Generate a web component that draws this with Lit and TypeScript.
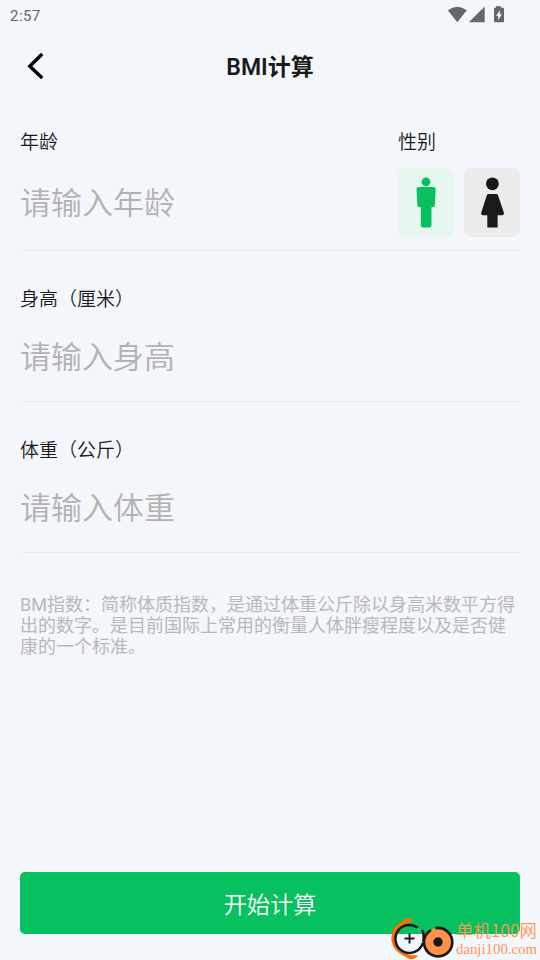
import { LitElement, html, css } from "lit";
import { customElement, property, state } from "lit/decorators.js";

@customElement("status-bar")
class StatusBar extends LitElement {
  static styles = css`
    :host { display: flex; height: 32px; padding: 0 35px 0 10px; align-items: center; justify-content: space-between; box-sizing: border-box; color: #656769; }
    .time { font: 450 15px/32px Roboto, sans-serif; letter-spacing: 0.45px; }
    svg { display: block; width: 58px; height: 20px; margin-top: -2px; }
  `;
  render() {
    return html`<span class="time">2:57</span>
      <svg viewBox="0 0 58 20" fill="#656769">
        <path d="M0.8 5.2Q10.3-1.8 19.8 5.2L10.3 17.2Z" />
        <path d="M37.7 1.5V17.2H21.8Z" />
        <path d="M49 1.2h5v1.5h2.2q.8 0 .8.8v13q0 .8-.8.8h-8.4q-.8 0-.8-.8V3.5q0-.8.8-.8H49z" />
        <path fill="#fff" d="M52.8 5.2v4h2L51.2 15v-4h-2z" />
      </svg>`;
  }
}

@customElement("bmi-field")
class BmiField extends LitElement {
  @property() label = "";
  @property() hint = "";
  static styles = css`
    :host { display: block; flex: 1; min-width: 0; }
    .label { font-size: 19px; line-height: 28px; height: 28px; color: #1a1a1a; }
    input { display: block; width: 100%; height: 62px; margin: var(--input-gap, 12px) 0 0; padding: 0; border: 0; outline: 0; background: none; font: inherit; font-size: 31px; color: #1a1a1a; }
    input::placeholder { color: #b2b2b2; opacity: 1; }
  `;
  render() {
    return html`<div class="label">${this.label}</div><input placeholder=${this.hint} />`;
  }
}

@customElement("gender-picker")
class GenderPicker extends LitElement {
  @state() selected = "male";
  static styles = css`
    :host { display: block; width: 122px; }
    .label { font-size: 19px; line-height: 28px; color: #1a1a1a; }
    .options { display: flex; gap: 10px; margin-top: 11px; }
    button { width: 56px; height: 69px; padding: 0; border: 0; border-radius: 8px; background: #ececec; color: #1a1a1a; }
    button.on { background: #e5f7ee; color: #07c160; }
    svg { display: block; width: 56px; height: 69px; fill: currentColor; }
  `;
  render() {
    return html`<div class="label">性别</div>
      <div class="options">
        <button class=${this.selected === "male" ? "on" : ""} @click=${() => (this.selected = "male")} aria-label="男">
          <svg viewBox="0 0 56 69">
            <circle cx="28" cy="13.8" r="4.4" />
            <path d="M20.6 19H35.6Q37.8 19 37.7 21.2L36.8 37.2Q36.7 39.2 34.7 39.2H33.5V57.5Q33.5 59.6 31.4 59.6H24.9Q22.8 59.6 22.8 57.5V39.2H21.5Q19.5 39.2 19.4 37.2L18.5 21.2Q18.4 19 20.6 19Z" />
          </svg>
        </button>
        <button class=${this.selected === "female" ? "on" : ""} @click=${() => (this.selected = "female")} aria-label="女">
          <svg viewBox="0 0 56 69">
            <circle cx="28.4" cy="15.8" r="6.4" />
            <path d="M24.5 26H32.3Q33.5 26 34 27.3L39.8 44.5Q40.4 47.2 38 47.2H33.6V59.6H23.3V47.2H19Q16.5 47.2 17.3 44.5L22.8 27.3Q23.3 26 24.5 26Z" />
          </svg>
        </button>
      </div>`;
  }
}

@customElement("site-mark")
class SiteMark extends LitElement {
  static styles = css`
    :host { display: flex; gap: 1px; height: 44px; width: 150px; color: #ff9656; }
    svg { width: 65px; height: 44px; flex: none; }
    .words { padding-top: 4px; white-space: nowrap; }
    .name { font: 350 17.4px/20px "Noto Sans CJK SC", sans-serif; height: 20px; }
    .site { font: 14.8px/18px "Liberation Serif", serif; }
  `;
  render() {
    return html`<svg viewBox="0 0 65 44" fill="none">
        <path d="M22 5.5Q10 8 6 17Q1.500 27 9.500 34.500Q14 38 21 39.200L28 39.200Q25 43.500 20 43.200L14 40Q3.500 35 1.500 25Q.5 11 12.500 5.500Q15 1.500 20 2.200Q24.500 4 22 5.500Z" fill="#ff6a0a" />
        <circle cx="19.500" cy="23" r="13" fill="#f3f6fb" />
        <path d="M7.500 18Q10.500 10.300 19.500 10Q28 10.500 31.500 18Z" fill="#07c160" />
        <path d="M27.800 11.800A14 14 0 1 0 32.800 27" stroke="#191919" stroke-width="2.600" />
        <path d="M32 13.800Q34.500 18 33.500 26" stroke="#191919" stroke-width="2.600" />
        <circle cx="48" cy="26" r="14" fill="#ff9148" />
        <path d="M45.500 12.200A14.200 14.200 0 1 1 35.800 19Q38 16 41 14" stroke="#191919" stroke-width="2.700" />
        <circle cx="48" cy="26" r="4.700" fill="#191919" />
        <path d="M14.500 22.500h10M19.500 17.500v10" stroke="#191919" stroke-width="1.900" />
      </svg>
      <div class="words"><div class="name">单机100网</div><div class="site">danji100.com</div></div>`;
  }
}

@customElement("app-root")
class AppRoot extends LitElement {
  static styles = css`
    :host { display: flex; flex-direction: column; position: relative; width: 540px; height: 960px; overflow: hidden; box-sizing: border-box; background: #f3f6fb; font-family: Roboto, "Noto Sans CJK SC", sans-serif; font-weight: 350; }
    header { display: grid; grid-template-columns: 72px 1fr 72px; height: 69px; align-items: center; }
    header svg { display: block; width: 20px; height: 28px; margin-left: 26px; margin-top: -3px; }
    h1 { margin: 2px 0 0; font-size: 23px; line-height: 34px; font-weight: 600; text-align: center; color: #1a1a1a; }
    main { flex: 1; padding: 28px 20px 0; }
    .row { display: flex; box-sizing: border-box; height: 151px; border-bottom: 1px solid #ececec; padding-top: 35px; }
    .row.first { height: 122px; padding-top: 0; --input-gap: 15px; }
    p { margin: 41px 0 0; font-size: 18px; line-height: 21px; color: #b8b8b8; font-weight: 400; }
    .submit { margin: 0 20px 26px; height: 62px; flex: none; border: 0; border-radius: 5px; background: #07c160; color: #fff; font: inherit; font-size: 23.2px; }
    site-mark { position: absolute; left: 390px; top: 916px; }
  `;
  render() {
    return html`<status-bar></status-bar>
      <header>
        <svg viewBox="0 0 20 28"><path d="M16.2 3L3.8 15.2L16.2 27" fill="none" stroke="#000" stroke-width="3.4" /></svg>
        <h1>BMI计算</h1>
      </header>
      <main>
        <div class="row first">
          <bmi-field label="年龄" hint="请输入年龄"></bmi-field>
          <gender-picker></gender-picker>
        </div>
        <div class="row"><bmi-field label="身高（厘米）" hint="请输入身高"></bmi-field></div>
        <div class="row"><bmi-field label="体重（公斤）" hint="请输入体重"></bmi-field></div>
        <p>BM指数：简称体质指数，是通过体重公斤除以身高米数平方得出的数字。是目前国际上常用的衡量人体胖瘦程度以及是否健康的一个标准。</p>
      </main>
      <button class="submit">开始计算</button>
      <site-mark></site-mark>`;
  }
}
